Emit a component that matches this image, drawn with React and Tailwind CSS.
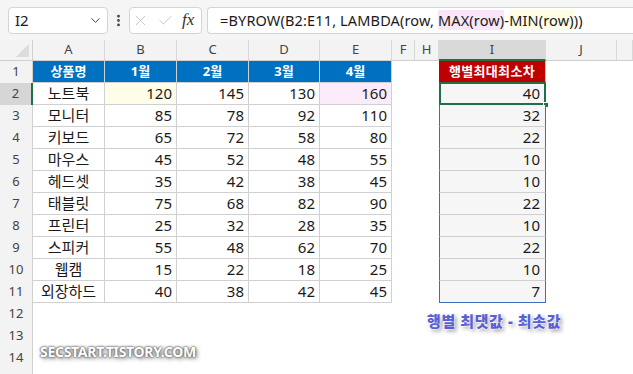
import { ChevronDown, EllipsisVertical, X, Check } from "lucide-react";

const rows = [
  ["노트북", 120, 145, 130, 160, 40],
  ["모니터", 85, 78, 92, 110, 32],
  ["키보드", 65, 72, 58, 80, 22],
  ["마우스", 45, 52, 48, 55, 10],
  ["헤드셋", 35, 42, 38, 45, 10],
  ["태블릿", 75, 68, 82, 90, 22],
  ["프린터", 25, 32, 28, 35, 10],
  ["스피커", 55, 48, 62, 70, 22],
  ["웹캠", 15, 22, 18, 25, 10],
  ["외장하드", 40, 38, 42, 45, 7],
];

const heads = ["상품명", "1월", "2월", "3월", "4월"];
const letters = ["A", "B", "C", "D", "E", "F", "H", "I", "J", ""];

const cellLine = "border-r border-b border-[#d0d0d0]";

function RowHead({ n, active }) {
  return (
    <div
      className={
        "flex items-center justify-center text-[13px] text-[#444] border-r " +
        (active ? "bg-[#d6d6d6] border-r-2 border-r-[#1e7145]" : "bg-[#f3f3f3] border-[#d0d0d0]")
      }
    >
      {n}
    </div>
  );
}

function Blank() {
  return <div className="bg-white" />;
}

function App() {
  return (
    <div
      className="relative w-[633px] h-[374px] overflow-hidden bg-white text-[#1a1a1a]"
      style={{ fontFamily: '"Noto Sans", "Noto Sans CJK KR", sans-serif' }}
    >
      {/* formula bar */}
      <div className="flex items-center h-[40px] bg-[#f5f5f5] pl-[8px]">
        <div className="flex items-center justify-between w-[100px] h-[27px] bg-white border border-[#d4d4d4] rounded-[4px] pl-[6px] pr-[4px] text-[15px]">
          <span>I2</span>
          <ChevronDown size={15} strokeWidth={1.6} className="text-[#444]" />
        </div>
        <EllipsisVertical size={15} strokeWidth={2.5} className="text-[#444] ml-[3px]" />
        <div className="flex items-center gap-[8px] w-[73px] h-[27px] ml-[3px] bg-white border border-[#d4d4d4] rounded-[4px] pl-[2px]">
          <X size={17} strokeWidth={1.2} className="text-[#bdbdbd]" />
          <Check size={17} strokeWidth={1.2} className="text-[#bdbdbd]" />
          <span
            className="italic text-[17px] text-[#333]"
            style={{ fontFamily: '"Liberation Serif", serif' }}
          >
            fx
          </span>
        </div>
        <div className="flex-1 h-[27px] ml-[5px] bg-white border border-[#d4d4d4] rounded-l-[4px] border-r-0 pl-[12px] text-[14.5px] tracking-[0.15px] leading-[25px] whitespace-pre">
          =BYROW(B2:E11, LAMBDA(row, <span className="bg-[#fbe6f9]">MAX(row)</span>-<span className="bg-[#fdfde6]">MIN(row)</span>))
        </div>
      </div>

      {/* sheet */}
      <div className="grid grid-cols-[33px_72px_72px_72px_71px_72px_23px_24px_107px_71px_1fr] grid-rows-[21px_repeat(15,22px)]">
        {/* column header */}
        <div className="relative bg-[#f3f3f3] border-r border-b border-[#d0d0d0]">
          <div className="absolute right-[3px] bottom-[3px] w-0 h-0 border-l-[13px] border-l-transparent border-b-[13px] border-b-[#dcdcdc]" />
        </div>
        {letters.map((l, i) => (
          <div
            key={i}
            className={
              "flex items-center justify-center text-[13px] text-[#444] border-r border-[#d8d8d8] " +
              (l === "I" ? "bg-[#d9d9d9] border-b-2 border-b-[#1e7145]" : "bg-[#f3f3f3] border-b border-b-[#d0d0d0]")
            }
          >
            {l}
          </div>
        ))}

        {/* row 1 */}
        <RowHead n={1} />
        {heads.map((h) => (
          <div key={h} className={"flex items-center justify-center bg-[#0070c0] text-white font-bold text-[13px] " + cellLine}>
            {h}
          </div>
        ))}
        <Blank />
        <Blank />
        <div className="flex items-center justify-center bg-[#c00000] text-white font-bold text-[13px] tracking-[0.3px] border-r border-b border-[#d0d0d0]">
          행별최대최소차
        </div>
        <Blank />
        <Blank />

        {rows.map((r, idx) => {
          const rn = idx + 2;
          const last = idx === rows.length - 1;
          return [
            <RowHead key={"h" + rn} n={rn} active={rn === 2} />,
            <div key={"a" + rn} className={"flex items-center justify-center text-[15px] " + cellLine}>
              {r[0]}
            </div>,
            ...r.slice(1, 5).map((v, j) => (
              <div
                key={"v" + rn + j}
                className={
                  "flex items-center justify-end pr-[4px] text-[15px] " +
                  cellLine +
                  (rn === 2 && j === 0 ? " bg-[#fefde8]" : "") +
                  (rn === 2 && j === 3 ? " bg-[#fcecfb]" : "")
                }
              >
                {v}
              </div>
            )),
            <Blank key={"f" + rn} />,
            <Blank key={"g" + rn} />,
            <div
              key={"i" + rn}
              className={
                "relative flex items-center justify-end pr-[5px] text-[15px] bg-[#f6f6f6] border-x border-x-[#3d6fc0] border-b " +
                (last ? "border-b-[#3d6fc0]" : "border-b-[#d0d0d0]")
              }
            >
              {r[5]}
              {rn === 2 && (
                <>
                  <div className="absolute -left-[1px] -top-[1px] -right-[1px] -bottom-[1px] border-2 border-[#1e7145]" />
                  <div className="absolute -right-[4px] -bottom-[4px] w-[6px] h-[6px] bg-[#1e7145] border border-white" />
                </>
              )}
            </div>,
            <Blank key={"j" + rn} />,
            <Blank key={"k" + rn} />,
          ];
        })}

        {[12, 13, 14].map((n) => [
          <RowHead key={"h" + n} n={n} />,
          <div key={"e" + n} className="col-span-10 bg-white" />,
        ])}
        <div className="bg-[#f3f3f3] border-r border-[#d0d0d0]" />
        <div className="col-span-10 bg-white" />
      </div>

      {/* annotations */}
      <div className="absolute left-[427px] top-[310px] text-[15px] font-black text-[#5a5fd2] tracking-[0.6px] [text-shadow:0_0_2px_#fff,0_0_2px_#fff,0_0_2px_#fff,2px_2px_4px_#888]">
        행별 최댓값 - 최솟값
      </div>
      <div className="absolute left-[40px] top-[341px] text-[14px] font-bold text-white tracking-[-0.3px] [text-shadow:0_0_1px_#666,0_0_2px_#666,0_0_3px_#777,2px_2px_4px_#888]">
        SECSTART.TISTORY.COM
      </div>
    </div>
  );
}

export default App;
